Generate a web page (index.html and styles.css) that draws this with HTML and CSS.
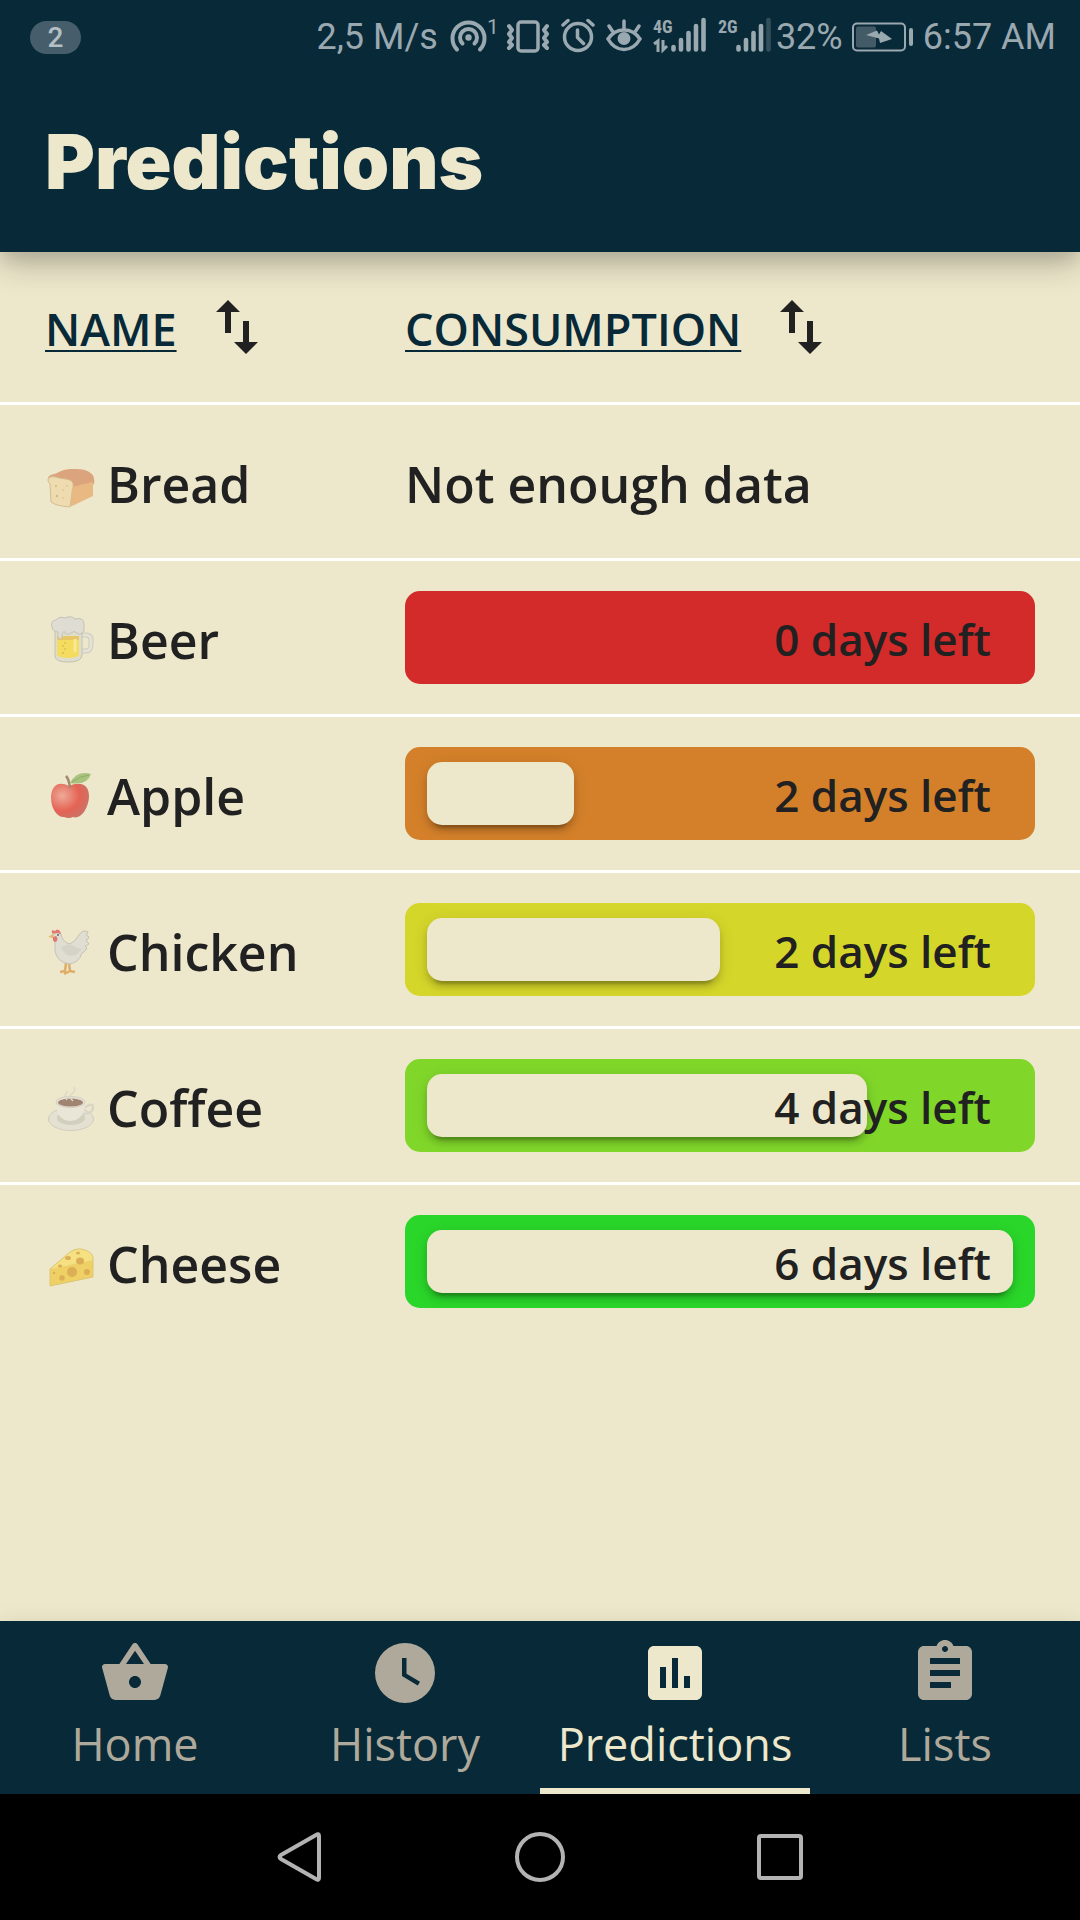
FILE: index.html
```html
<!DOCTYPE html>
<html lang="en">
<head>
<meta charset="utf-8">
<meta name="viewport" content="width=device-width, initial-scale=1">
<title>Predictions</title>
<link rel="stylesheet" href="styles.css">
</head>
<body>
<header class="app-header">
  <div class="status-bar">
    <span class="badge">2</span>
    <span class="speed">2,5 M/s</span>
    <svg class="status-icon hotspot" viewBox="0 0 52 42" width="52" height="42" aria-hidden="true">
      <g fill="none" stroke="currentColor" stroke-width="4" stroke-linecap="round"><path d="M7 33.500A16 16 0 1 1 30 33.500"/><path d="M12.500 27.500A8.500 8.500 0 1 1 24.500 27.500"/></g>
      <circle cx="18.500" cy="21.500" r="3.200" fill="currentColor"/>
      <text x="37" y="18" class="count">1</text>
    </svg>
    <svg class="status-icon" viewBox="0 0 44 42" width="44" height="42" aria-hidden="true">
      <g fill="none" stroke="currentColor" stroke-width="3.500" stroke-linecap="round" stroke-linejoin="round"><rect x="12" y="6" width="20" height="29" rx="3"/><path d="M3 10l3 4-3 4 3 4-3 4 3 3-3 3M41 10l-3 4 3 4-3 4 3 4-3 3 3 3" stroke-width="4"/></g>
    </svg>
    <svg class="status-icon alarm" viewBox="0 0 34 42" width="34" height="42" aria-hidden="true">
      <g fill="none" stroke="currentColor" stroke-width="3.500" stroke-linecap="round" stroke-linejoin="round"><circle cx="17" cy="21" r="13.500"/><path d="M16.500 14v7.500l6 6M2 9l5-4.500M32 9l-5-4.500"/></g>
    </svg>
    <svg class="status-icon eye" viewBox="0 0 36 42" width="36" height="42" aria-hidden="true">
      <g fill="none" stroke="currentColor" stroke-width="3.500" stroke-linecap="round"><path d="M2 23C10 11 26 11 34 23C26 37 10 37 2 23ZM18 13V5M7 16L3 10M29 16l4-6"/></g><circle cx="18" cy="22.500" r="6.500" fill="currentColor"/>
    </svg>
    <svg class="status-icon signal" viewBox="0 0 54 42" width="54" height="42" aria-hidden="true">
      <text x="0" y="17" class="net">4G</text>
      <path d="M1 28l4-3v11M10 24v10l4-4" fill="none" stroke="currentColor" stroke-width="3"/>
      <g stroke="currentColor" stroke-width="4.600" stroke-linecap="round"><path d="M20.500 31v2.500M28 24v9.500M35.500 17v16.500M43 10v23.500M50.500 4v29.500"/></g>
    </svg>
    <svg class="status-icon signal" viewBox="0 0 54 42" width="54" height="42" aria-hidden="true">
      <text x="0" y="17" class="net">2G</text>
      <g stroke="currentColor" stroke-width="4.600" stroke-linecap="round"><path d="M20.500 31v2.500M28 24v9.500M35.500 17v16.500M43 10v23.500"/><path d="M50.500 4v29.500" opacity=".3"/></g>
    </svg>
    <span class="percent">32%</span>
    <svg class="status-icon battery" viewBox="0 0 62 42" width="62" height="42" aria-hidden="true">
      <rect x="1" y="7.500" width="52" height="27" rx="4" fill="none" stroke="currentColor" stroke-width="2"/><rect x="4" y="10.500" width="20" height="21" rx="2" fill="currentColor" opacity=".4"/><path d="M14 19L25 14.500L27 18.500L29 15L40 23L28 27L27 22.500z" fill="currentColor"/><rect x="57" y="12" width="4" height="18" rx="2" fill="currentColor"/>
    </svg>
    <span class="clock">6:57 AM</span>
  </div>
  <h1 class="title">Predictions</h1>
</header>

<main class="content">
  <table class="predictions">
    <thead>
      <tr>
        <th scope="col" class="name-col"><button type="button" class="sort"><span class="sort-label">NAME</span><svg viewBox="0 0 24 24" width="72" height="72" fill="currentColor" aria-hidden="true"><path d="M16 17.010V10h-2v7.010h-3L15 21l4-3.990h-3zM9 3L5 6.990h3V14h2V6.990h3L9 3z"/></svg></button></th>
        <th scope="col"><button type="button" class="sort"><span class="sort-label">CONSUMPTION</span><svg viewBox="0 0 24 24" width="72" height="72" fill="currentColor" aria-hidden="true"><path d="M16 17.010V10h-2v7.010h-3L15 21l4-3.990h-3zM9 3L5 6.990h3V14h2V6.990h3L9 3z"/></svg></button></th>
      </tr>
    </thead>
    <tbody>
      <tr>
        <td><div class="product"><svg class="food" viewBox="-3 -3 54 54" aria-hidden="true"><path d="M1 21C-2 15 4 15 9 13C16 9 20 9 28 9C40 9 46 14 46 19Q47 23 45 25L24 33z" fill="#dca47d"/><path d="M24 27Q36 24 45 22V36L22 47z" fill="#e9b984"/><path d="M2 24C-3 18 2 16 8 17C14 20 27 17 25 27Q24 30 24 32L22 47Q8 46 3 42z" fill="#eedbb0" stroke="#d6bd91"/><g fill="#cdbb8b"><circle cx="8" cy="26" r="1"/><circle cx="9" cy="36" r="1.200"/><circle cx="15" cy="30" r=".8"/><circle cx="19" cy="26" r=".8"/><circle cx="15" cy="38" r=".7"/></g></svg><span>Bread</span></div></td>
        <td class="no-data">Not enough data</td>
      </tr>
      <tr>
        <td><div class="product"><svg class="food" viewBox="-3 -3 54 54" aria-hidden="true"><path d="M33 19h5q5 0 5 5v4q0 7-5 7h-5" fill="none" stroke="#cfccb9" stroke-width="5"/><path d="M33 19h5q5 0 5 5v4q0 7-5 7h-5" fill="none" stroke="#e4e2d6" stroke-width="3"/><path d="M7 12H34V39Q34 46 20 46Q7 46 7 40z" fill="#dfddcb" stroke="#c4c2b0"/><path d="M9 20H31V39Q29 42 20 42Q11 42 9 39z" fill="#f4dc61"/><path d="M9 20H31V24H9z" fill="#e7c665"/><path d="M27 23v13" stroke="#f8e794" stroke-width="3"/><path d="M4 11Q2 5 8 4Q11 0 17 2Q23-1 27 3Q36 1 36 8V15Q32 20 29 17Q26 14 23 17Q18 20 17 16Q14 15 14 21Q12 25 10 21V16Q5 16 4 11z" fill="#dfddd3" stroke="#c4c2b4"/><g fill="#c9a33f"><circle cx="15" cy="30" r=".7"/><circle cx="17" cy="33" r=".7"/><circle cx="15" cy="37" r=".8"/><circle cx="17" cy="27" r=".7"/></g></svg><span>Beer</span></div></td>
        <td><div class="meter red"><span class="days">0 days left</span></div></td>
      </tr>
      <tr>
        <td><div class="product"><svg class="food" viewBox="-3 -3 54 54" aria-hidden="true"><defs><radialGradient id="skin" cx=".3" cy=".35" r=".75"><stop offset="0" stop-color="#efaa98"/><stop offset=".6" stop-color="#e46354"/><stop offset="1" stop-color="#c97466"/></radialGradient></defs><path d="M21 14C10 8 3 14 3 26C3 37 10 46 16 45Q21 47 25 45C34 48 41 34 41 24C41 12 32 9 21 14z" fill="url(#skin)"/><path d="M22 16Q21 7 18 4" fill="none" stroke="#a38a70" stroke-width="2.500"/><path d="M22 11Q29-2 43 2Q39 14 22 11z" fill="#a9c37e"/><path d="M24 10Q32 4 41 3" fill="none" stroke="#8eae68"/></svg><span>Apple</span></div></td>
        <td><div class="meter orange"><div class="fill" style="width: 25%"></div><span class="days">2 days left</span></div></td>
      </tr>
      <tr>
        <td><div class="product"><svg class="food" viewBox="-3 -3 54 54" aria-hidden="true"><path d="M18 35l-1 8-5 1M21 35l1 8-6 3M22 43l5 1" fill="none" stroke="#e0ad67" stroke-width="2.500"/><path d="M5 8Q8 3 13 6Q14 14 22 16Q28 13 31 7Q35 1 40 4Q40 6 38 7L41 9Q40 12 38 12L41 16Q38 18 37 18L39 20Q37 24 34 25Q31 35 21 36Q9 34 7 23Q8 15 5 8z" fill="#e0ded3" stroke="#c4c2b3"/><path d="M13 20Q20 14 26 18Q31 22 34 20Q29 30 19 27z" fill="#d5d3c7"/><path d="M4 5Q3 1 7 3Q9 0 12 3L13 6Q8 4 5 6zM5 9Q4 14 8 14Q11 11 8 8z" fill="#e17971"/><path d="M5 6L0 9l5 1z" fill="#e5b871"/><circle cx="10" cy="7" r="1" fill="#666"/></svg><span>Chicken</span></div></td>
        <td><div class="meter yellow"><div class="fill" style="width: 50%"></div><span class="days">2 days left</span></div></td>
      </tr>
      <tr>
        <td><div class="product"><svg class="food" viewBox="-3 -3 54 54" aria-hidden="true"><ellipse cx="23" cy="35" rx="22.500" ry="11.500" fill="#e4e1d2" stroke="#cfccbd"/><ellipse cx="23" cy="34" rx="14" ry="7" fill="#d2cfbf"/><path d="M36 24Q45 18 45 23Q45 30 34 30" fill="none" stroke="#d9d6c8" stroke-width="2.500"/><path d="M8 18Q8 36 22 37Q37 36 37 18z" fill="#e9e6d8"/><ellipse cx="22.500" cy="18" rx="14.500" ry="5.500" fill="#e8e5d8" stroke="#d1cebf"/><ellipse cx="22.500" cy="18.500" rx="12.500" ry="4" fill="#a08471"/><path d="M19 16Q15 11 20 7M25 17Q19 12 25 9Q28 6 26 3" fill="none" stroke="#ddd9c9" stroke-width="1.500"/></svg><span>Coffee</span></div></td>
        <td><div class="meter lime"><div class="fill" style="width: 75%"></div><span class="days">4 days left</span></div></td>
      </tr>
      <tr>
        <td><div class="product"><svg class="food" viewBox="-3 -3 54 54" aria-hidden="true"><path d="M2 29L22 12Q30 7 37 10Q46 13 45 20z" fill="#f5e181"/><path d="M2 29L45 20V37L2 46z" fill="#efd064"/><path d="M2 29L22 12Q30 7 37 10Q46 13 45 20V37L2 46z" fill="none" stroke="#dcc675"/><g fill="#dcae55"><circle cx="24" cy="32" r="5"/><circle cx="39" cy="32" r="3"/><circle cx="14" cy="38" r="2.700"/><circle cx="6" cy="33" r="1.300"/><ellipse cx="32" cy="21" rx="4" ry="3.500"/><ellipse cx="20" cy="18" rx="3" ry="2"/><ellipse cx="12" cy="26" rx="2.200" ry="1.500"/><ellipse cx="30" cy="13" rx="2" ry="1.500"/></g></svg><span>Cheese</span></div></td>
        <td><div class="meter green"><div class="fill" style="width: 100%"></div><span class="days">6 days left</span></div></td>
      </tr>
    </tbody>
  </table>
</main>

<nav class="tabs" aria-label="Main">
  <a class="tab" href="#home"><svg viewBox="0 0 24 24" fill="currentColor" aria-hidden="true"><path fill-rule="evenodd" d="M17.210 9l-4.380-6.560c-.19-.28-.51-.42-.83-.42-.32 0-.64.14-.83.430L6.790 9H2c-.55 0-1 .45-1 1 0 .09.010.18.040.270l2.540 9.270c.23.840 1 1.460 1.920 1.460h13c.92 0 1.690-.62 1.930-1.460l2.540-9.270L23 10c0-.55-.45-1-1-1h-4.790zM9 9l3-4.400L15 9H9zm3 8c-1.100 0-2-.9-2-2s.9-2 2-2 2 .9 2 2-.9 2-2 2z"/></svg><span>Home</span></a>
  <a class="tab" href="#history"><svg viewBox="0 0 24 24" fill="currentColor" aria-hidden="true"><path fill-rule="evenodd" d="M12 2a10 10 0 1 0 0 20 10 10 0 0 0 0-20zm4.250 14.150L11 13V7h1.500v5.250l4.500 2.670z"/></svg><span>History</span></a>
  <a class="tab active" href="#predictions" aria-current="page"><svg viewBox="0 0 24 24" fill="currentColor" aria-hidden="true"><path d="M19 3H5c-1.100 0-2 .9-2 2v14c0 1.100.9 2 2 2h14c1.100 0 2-.9 2-2V5c0-1.100-.9-2-2-2zM9 17H7v-7h2v7zm4 0h-2V7h2v10zm4 0h-2v-4h2v4z"/></svg><span>Predictions</span></a>
  <a class="tab" href="#lists"><svg viewBox="0 0 24 24" fill="currentColor" aria-hidden="true"><path d="M19 3h-4.180C14.400 1.840 13.300 1 12 1c-1.300 0-2.400.84-2.820 2H5c-1.100 0-2 .9-2 2v14c0 1.100.9 2 2 2h14c1.100 0 2-.9 2-2V5c0-1.100-.9-2-2-2zm-7 0c.55 0 1 .45 1 1s-.45 1-1 1-1-.45-1-1 .45-1 1-1zm2 14H7v-2h7v2zm3-4H7v-2h10v2zm0-4H7V7h10v2z"/></svg><span>Lists</span></a>
</nav>

<div class="system-bar">
  <button type="button" aria-label="Back"><svg viewBox="0 0 54 54" aria-hidden="true"><path d="M46 6V48Q46 51 43 49L8 29Q5 27 8 25L43 5Q46 3 46 6z"/></svg></button>
  <button type="button" aria-label="Home screen"><svg viewBox="0 0 54 54" aria-hidden="true"><circle cx="27" cy="27" r="23"/></svg></button>
  <button type="button" aria-label="Recent apps"><svg viewBox="0 0 54 54" aria-hidden="true"><rect x="6" y="6" width="42" height="42" rx="2"/></svg></button>
</div>
</body>
</html>
```
FILE: styles.css
```css
:root {
  --navy: #082938;
  --cream: #ede8cb;
  --ink: #212121;
  --muted: #aea99a;
  --status: #9aa8b0;
}

* { box-sizing: border-box; }

body {
  margin: 0;
  min-height: 100vh;
  display: flex;
  flex-direction: column;
  background: var(--cream);
  color: var(--ink);
  font-family: "Open Sans", "Noto Sans", sans-serif;
  font-weight: 600;
  font-size: 50px;
}

button {
  padding: 0;
  border: 0;
  background: none;
  color: inherit;
  font: inherit;
}

svg { display: block; flex: none; }

.app-header {
  position: relative;
  z-index: 1;
  background: var(--navy);
  color: var(--cream);
  box-shadow: 0 12px 12px -3px rgba(0, 0, 0, .06), 0 12px 30px rgba(0, 0, 0, .24);
}

.status-bar {
  display: flex;
  align-items: center;
  height: 74px;
  padding: 0 24px 0 30px;
  color: var(--status);
  font-family: Roboto, sans-serif;
  font-weight: 400;
  font-size: 36px;
}

.badge {
  width: 51px;
  height: 33px;
  border-radius: 17px;
  background: #465e6b;
  color: #b5c0c6;
  font-size: 28px;
  font-weight: 500;
  line-height: 33px;
  text-align: center;
}

.speed { margin-left: auto; }
.hotspot { margin-left: 12px; }
.status-icon + .status-icon { margin-left: 4px; }
.status-icon + .alarm, .status-icon + .eye, .status-icon + .signal { margin-left: 11px; }
.percent { margin-left: 4px; }
.battery { margin-left: 9px; }
.clock { margin-left: 9px; }

.net, .count { fill: currentColor; }
.count { font-size: 21px; }

.net {
  font-family: "Liberation Sans Narrow", "Roboto Condensed", Roboto, sans-serif;
  font-size: 18px;
  font-weight: 700;
}

.title {
  margin: 0;
  padding: 42px 45px 46px;
  font-family: Inter, sans-serif;
  font-size: 76px;
  font-weight: 900;
  line-height: 90px;
}

.content { flex: 1; }

.predictions {
  width: 100%;
  table-layout: fixed;
  border-spacing: 0;
}

.name-col { width: 37.5%; }

.predictions th,
.predictions td {
  height: 156px;
  padding: 0;
  border-bottom: 3px solid #fff;
  text-align: left;
  vertical-align: middle;
}

.predictions th { height: 153px; }

.predictions tbody tr:last-child td {
  height: 153px;
  border-bottom: 0;
}

.predictions th:first-child,
.predictions td:first-child { padding-left: 45px; }
.predictions td:last-child { padding-right: 45px; }

.sort {
  display: flex;
  align-items: center;
  gap: 24px;
  font-size: 45px;
  font-weight: 600;
}

.sort-label {
  padding-top: 4px;
  color: var(--navy);
  line-height: 48px;
  text-decoration: underline;
  text-decoration-thickness: 2px;
  text-underline-offset: 4px;
}

.product {
  display: flex;
  align-items: center;
  gap: 8px;
}

.food { width: 54px; height: 54px; }

.predictions .no-data, .product { padding-top: 4px; }

.meter {
  display: grid;
  align-items: center;
  height: 93px;
  padding: 15px 22px;
  border-radius: 15px;
  font-size: 44px;
}

.fill, .days { grid-area: 1 / 1; }

.fill {
  height: 63px;
  border-radius: 15px;
  background: var(--cream);
  box-shadow: 0 9px 3px -6px rgba(0, 0, 0, .2), 0 6px 6px rgba(0, 0, 0, .14), 0 3px 15px rgba(0, 0, 0, .12);
}

.days {
  padding: 3px 22px 0 0;
  line-height: 60px;
  text-align: right;
}

.red { background: #d32a2a; }
.orange { background: #d4802a; }
.yellow { background: #d5d62a; }
.lime { background: #80d72a; }
.green { background: #2ad62a; }

.tabs {
  display: grid;
  grid-template-columns: repeat(4, 1fr);
  background: var(--navy);
  box-shadow: 0 3px 24px rgba(0, 0, 0, .1);
}

.tab {
  display: flex;
  flex-direction: column;
  align-items: center;
  height: 173px;
  padding-top: 16px;
  border-bottom: 6px solid transparent;
  color: var(--muted);
  font-size: 45px;
  font-weight: 400;
  line-height: 70px;
  text-decoration: none;
}

.tab svg { width: 72px; height: 72px; }
.tab.active { color: var(--cream); border-color: var(--cream); }

.system-bar {
  position: relative;
  display: flex;
  justify-content: center;
  align-items: center;
  gap: 186px;
  height: 126px;
  background: #000;
}

.system-bar svg {
  width: 54px;
  height: 54px;
  fill: none;
  stroke: #b3b3b3;
  stroke-width: 4;
}
```
